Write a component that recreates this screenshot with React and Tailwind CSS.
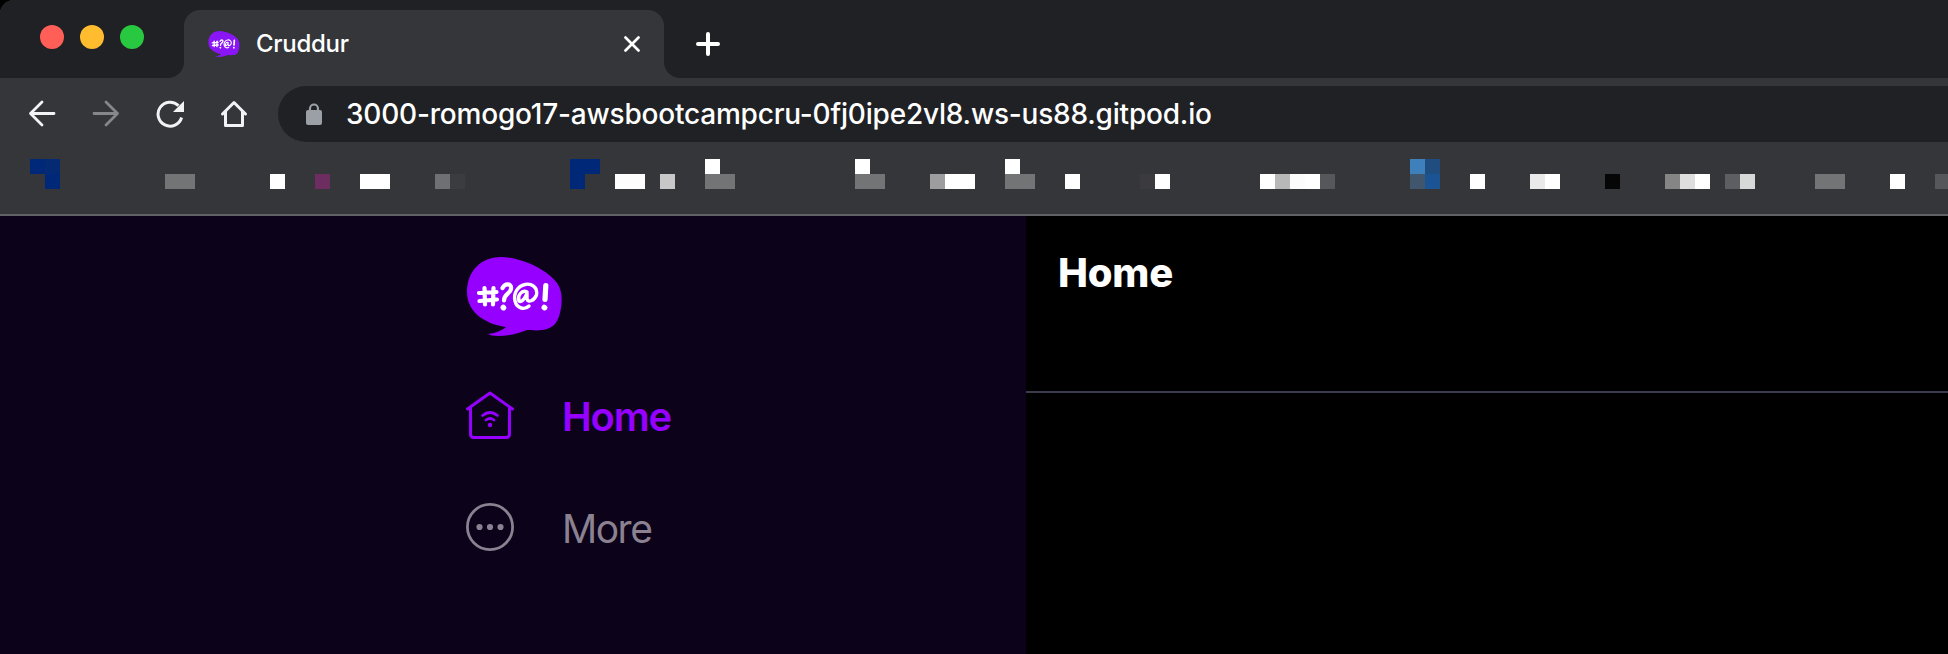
import React from "react";

const bookmarkCells = [
  [2, 1, "#002878"], [3, 1, "#042a74"], [3, 2, "#002878"],
  [11, 2, "#737476"], [12, 2, "#737476"],
  [18, 2, "#ffffff"], [21, 2, "#6d2d61"], [24, 2, "#ffffff"], [25, 2, "#ffffff"],
  [29, 2, "#6f7074"], [30, 2, "#3b3c40"],
  [38, 1, "#002878"], [39, 1, "#002878"], [38, 2, "#002878"],
  [41, 2, "#fdfdfd"], [42, 2, "#fdfdfd"], [44, 2, "#c8c8c8"],
  [47, 1, "#ffffff"], [47, 2, "#737476"], [48, 2, "#737476"],
  [57, 1, "#ffffff"], [57, 2, "#737476"], [58, 2, "#737476"],
  [62, 2, "#9d9da0"], [63, 2, "#ffffff"], [64, 2, "#ffffff"],
  [67, 1, "#ffffff"], [67, 2, "#737476"], [68, 2, "#737476"],
  [71, 2, "#ffffff"], [76, 2, "#3b3b3f"], [77, 2, "#ffffff"],
  [84, 2, "#ffffff"], [85, 2, "#b8b8b8"], [86, 2, "#fcfcfc"], [87, 2, "#ffffff"], [88, 2, "#56575b"],
  [94, 1, "#3e80bc"], [95, 1, "#204d80"], [94, 2, "#3f566d"], [95, 2, "#1a5495"],
  [98, 2, "#ffffff"], [102, 2, "#e9e9e9"], [103, 2, "#ffffff"],
  [107, 2, "#060606"], [111, 2, "#858586"], [112, 2, "#dedede"], [113, 2, "#ffffff"],
  [115, 2, "#5d5e62"], [116, 2, "#d7d8d8"],
  [121, 2, "#737476"], [122, 2, "#737476"], [126, 2, "#ffffff"], [129, 2, "#56575b"],
];

function Logo({ className, color }) {
  return (
    <svg className={className} viewBox="0 0 95 79" fill="none">
      <path
        d="M34 0C53 0 80 12 90 26C95 33 96 43 93 56C90 68 84 72 75 73C69 74 64 73 60 73C50 77 40 79 31 79C26 79 23 78 21 77C29 76 36 73 39 70C23 68 0 58 0 35C0 14 14 0 34 0Z"
        fill={color}
      />
      <g stroke="#fff" strokeWidth="4.2" strokeLinecap="round" strokeLinejoin="round">
        <path d="M17.500 31L18 47.500M26.500 31L26 47.500M12 36L29.500 35M12.500 44L30 42.500" />
        <path d="M35.500 31C38 26 45 26 44 32C43 37 37 37 37 43.500" />
        <path d="M36.300 50.500L36.500 50.700" strokeWidth="5.500" />
        <path d="M60 35C55 32 50 39 52 44C54 46 58 42 60 36L60 42C61 46 67 44 69.500 38C71 30 64 26 58 27.500C51 29 46 36 48 44C50 52 58 53 62 49" strokeWidth="3.400" />
        <path d="M78.800 28.500L78 42.500" strokeWidth="5.200" />
        <path d="M77.300 50.500L77.600 50.700" strokeWidth="5.500" />
      </g>
    </svg>
  );
}

function TabStrip() {
  return (
    <div className="flex h-[78px] bg-[#202124] pl-10">
      <div className="flex gap-4 pt-[25px]">
        <span className="size-6 rounded-full bg-[#ff5f57]" />
        <span className="size-6 rounded-full bg-[#febc2e]" />
        <span className="size-6 rounded-full bg-[#28c840]" />
      </div>
      <div className="ml-6 flex w-4 items-end bg-[#35363a]">
        <div className="h-full w-4 rounded-br-2xl bg-[#202124]" />
      </div>
      <div className="mt-[10px] flex w-[480px] items-start rounded-t-2xl bg-[#35363a]">
        <Logo className="mt-[21px] ml-6 h-[26px] w-8" color="#8a16f8" />
        <span className="mt-4 ml-4 font-[Inter,sans-serif] text-[24px] leading-9 font-medium tracking-[-0.3px] text-white">
          Cruddur
        </span>
        <svg className="mt-[26px] mr-6 ml-auto size-4" viewBox="0 0 16 16" stroke="#fff" strokeWidth="2.7" strokeLinecap="round">
          <path d="M1.500 1.500L14.500 14.500M14.500 1.500L1.500 14.500" />
        </svg>
      </div>
      <div className="flex w-4 bg-[#35363a]">
        <div className="h-full w-4 rounded-bl-2xl bg-[#202124]" />
      </div>
      <svg className="mt-8 ml-4 size-6" viewBox="0 0 24 24" stroke="#fff" strokeWidth="4" strokeLinecap="round">
        <path d="M2 12H22M12 2V22" />
      </svg>
    </div>
  );
}

function Toolbar() {
  return (
    <div className="flex h-[72px] items-start pt-2 pl-7">
      <svg className="mt-[14px] size-7" viewBox="0 0 28 28" fill="none" stroke="#f1f3f4" strokeWidth="2.8" strokeLinecap="round" strokeLinejoin="round">
        <path d="M26 13.500H2.500M14 2L2.500 13.500L14 25" />
      </svg>
      <svg className="mt-[14px] ml-9 size-7" viewBox="0 0 28 28" fill="none" stroke="#86878a" strokeWidth="2.800" strokeLinecap="round" strokeLinejoin="round">
        <path d="M2 13.500H25.500M14 2L25.500 13.500L14 25" />
      </svg>
      <svg className="mt-[14px] ml-9 size-7" viewBox="0 0 28 28" fill="none">
        <path d="M25.600 17.500A12 12 0 1 1 22.500 5.600" stroke="#f1f3f4" strokeWidth="3" />
        <path d="M28 1V12H17Z" fill="#f1f3f4" />
      </svg>
      <svg className="mt-[14px] ml-9 size-7" viewBox="0 0 28 28" fill="none" stroke="#f1f3f4" strokeWidth="3" strokeLinecap="round" strokeLinejoin="round">
        <path d="M2.500 14L14 2.500L25.500 14M5.500 12V25.500H22.500V12" />
      </svg>
      <div className="ml-[30px] flex h-14 flex-1 items-center rounded-l-full bg-[#202124] pl-7">
        <svg className="h-[22px] w-4" viewBox="0 0 16 22" fill="none">
          <rect y="7" width="16" height="15" rx="2" fill="#9aa0a6" />
          <path d="M4 8V5.500A4 4 0 0 1 12 5.500V8" stroke="#9aa0a6" strokeWidth="2.200" />
        </svg>
        <span className="ml-6 font-[Inter,sans-serif] text-[28px] leading-9 font-medium tracking-[-0.2px] whitespace-nowrap text-white">
          3000-romogo17-awsbootcampcru-0fj0ipe2vl8.ws-us88.gitpod.io
        </span>
      </div>
    </div>
  );
}

function BookmarksBar() {
  return (
    <div className="grid h-[66px] grid-cols-[repeat(130,15px)] grid-rows-[15px_15px] overflow-hidden border-b-2 border-[#5f6164] pt-[9px]">
      {bookmarkCells.map(([column, row, color]) => (
        <span
          key={`${column}-${row}`}
          style={{ gridColumn: column + 1, gridRow: row, backgroundColor: color }}
        />
      ))}
    </div>
  );
}

function Sidebar() {
  return (
    <aside className="w-[1026px] bg-[#0c0219] pt-[41px] pl-[466px] font-[Inter,sans-serif] text-[40px] leading-[48px]">
      <Logo className="ml-px h-[79px] w-[95px]" color="#9500ff" />
      <nav className="mt-[55px] flex flex-col gap-16">
        <a className="flex h-12 items-center gap-12 font-semibold text-[#9500ff]">
          <svg className="size-12" viewBox="0 0 48 48" fill="none" stroke="currentColor" strokeWidth="3" strokeLinecap="round" strokeLinejoin="round">
            <path d="M1.500 18L24 2L46.500 18M4.500 17V43Q4.500 46.500 8 46.500H40Q43.500 46.500 43.500 43V17" />
            <path d="M16.500 24.500Q24 18.500 31.500 24.500M20 29Q24 26 28 29" strokeWidth="2.800" />
            <circle cx="24" cy="34" r="2.200" fill="currentColor" stroke="none" />
          </svg>
          <span className="pt-1 tracking-[-1.2px]">Home</span>
        </a>
        <a className="flex h-12 items-center gap-12 text-[#8b8191]">
          <svg className="size-12" viewBox="0 0 48 48" fill="none">
            <circle cx="24" cy="24" r="22.600" stroke="currentColor" strokeWidth="2.800" />
            <g fill="currentColor">
              <circle cx="13.500" cy="24" r="3.100" />
              <circle cx="24" cy="24" r="3.100" />
              <circle cx="34.500" cy="24" r="3.100" />
            </g>
          </svg>
          <span className="pt-1 text-[39px] tracking-[-1.5px]">More</span>
        </a>
      </nav>
    </aside>
  );
}

export default function App() {
  return (
    <div className="bg-black">
      <div className="flex h-[654px] w-[1948px] flex-col overflow-hidden rounded-tl-[14px] bg-[#35363a]">
        <TabStrip />
        <Toolbar />
        <BookmarksBar />
        <div className="flex flex-1">
          <Sidebar />
          <main className="flex-1 bg-black">
            <header className="h-[177px] border-b-2 border-[#3a3b4d] px-8 pt-[33px]">
              <h1 className="font-[Inter,sans-serif] text-[40px] leading-[48px] font-extrabold tracking-[-0.2px] text-white">
                Home
              </h1>
            </header>
          </main>
        </div>
      </div>
    </div>
  );
}
